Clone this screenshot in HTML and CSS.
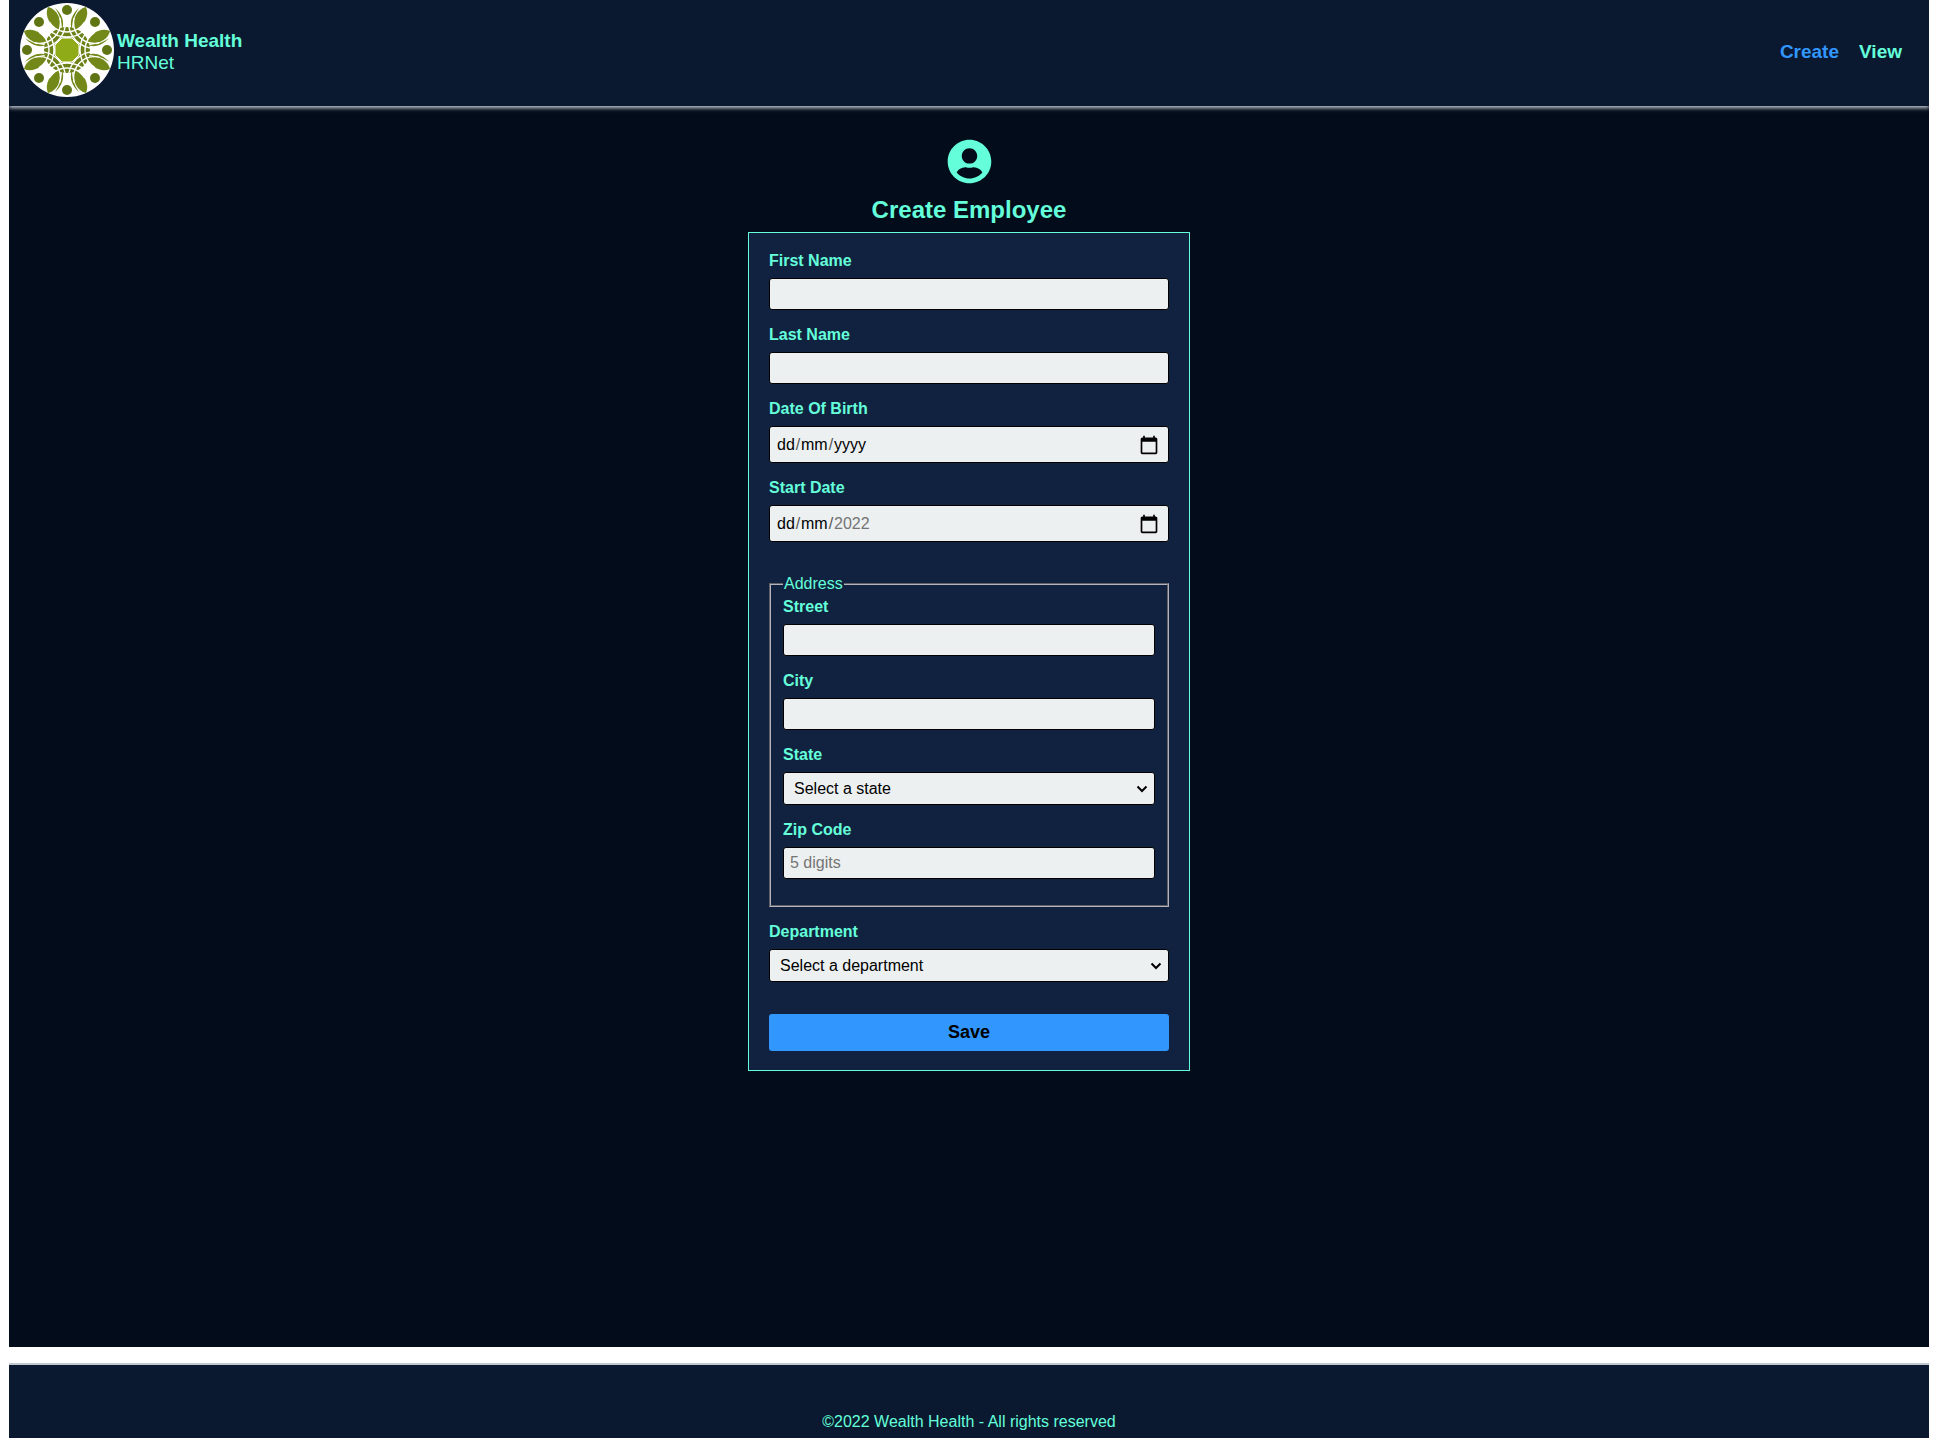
FILE: index.html
```html
<!DOCTYPE html>
<html lang="en">
<head>
<meta charset="utf-8">
<meta name="viewport" content="width=device-width, initial-scale=1">
<title>HRNet - Create Employee</title>
<link rel="stylesheet" href="styles.css">
</head>
<body>
<header class="site-header">
  <div class="brand">
    <svg class="brand-logo" viewBox="-47 -47 94 94" aria-hidden="true">
      <defs>
        <clipPath id="inner"><circle r="33"/></clipPath>
        <g id="leaf">
          <path d="M-19-43C-10-41-5-31-7-19C-17-24-23-34-19-43Z"/>
          <path d="M-12-42C-5-36-2-28-5-20C-5-28-7-35-12-42Z"/>
        </g>
        <g id="leaves"><use href="#leaf"/><use href="#leaf" transform="scale(-1 1)"/></g>
        <g id="arc"><circle cy="-39" r="21"/><circle cy="-39" r="26"/></g>
      </defs>
      <circle r="47" fill="#fff"/>
      <circle r="18" fill="none" stroke="#6b8218" stroke-width="10"/>
      <g fill="#72891a">
        <use href="#leaves"/><use href="#leaves" transform="rotate(90)"/><use href="#leaves" transform="rotate(180)"/><use href="#leaves" transform="rotate(270)"/>
      </g>
      <g clip-path="url(#inner)" fill="none" stroke="#fff" stroke-width="1.400">
        <use href="#arc"/><use href="#arc" transform="rotate(45)"/><use href="#arc" transform="rotate(90)"/><use href="#arc" transform="rotate(135)"/><use href="#arc" transform="rotate(180)"/><use href="#arc" transform="rotate(225)"/><use href="#arc" transform="rotate(270)"/><use href="#arc" transform="rotate(315)"/>
      </g>
      <path d="M-5-12H5L12-5V5L5 12H-5L-12 5V-5Z" fill="#8fab18" stroke="#fff"/>
      <g fill="#5f7412">
        <circle cy="-40" r="5"/><circle cy="40" r="5"/><circle cx="-40" r="5"/><circle cx="40" r="5"/>
        <circle cx="28" cy="-28" r="5"/><circle cx="28" cy="28" r="5"/><circle cx="-28" cy="28" r="5"/><circle cx="-28" cy="-28" r="5"/>
      </g>
    </svg>
    <div class="brand-text"><strong>Wealth Health</strong><span>HRNet</span></div>
  </div>
  <nav class="site-nav">
    <a class="nav-link nav-link-active" href="#create">Create</a>
    <a class="nav-link" href="#view">View</a>
  </nav>
</header>

<main class="page">
  <svg class="user-icon" viewBox="0 0 496 512" aria-hidden="true"><path fill="currentColor" d="M248 8C111 8 0 119 0 256s111 248 248 248 248-111 248-248S385 8 248 8zm0 96c48.600 0 88 39.400 88 88s-39.400 88-88 88-88-39.400-88-88 39.400-88 88-88zm0 344c-58.700 0-111.300-26.600-146.500-68.200 18.800-35.400 55.600-59.800 98.500-59.800 2.400 0 4.800.4 7.100 1.100 13 4.200 26.600 6.900 40.900 6.900 14.300 0 28-2.700 40.900-6.900 2.300-.7 4.700-1.100 7.100-1.100 42.900 0 79.700 24.400 98.500 59.800C359.300 421.400 306.700 448 248 448z"/></svg>
  <h1 class="page-title">Create Employee</h1>

  <form class="employee-form">
    <div class="field">
      <label class="label" for="first-name">First Name</label>
      <input class="control" id="first-name" type="text">
    </div>
    <div class="field">
      <label class="label" for="last-name">Last Name</label>
      <input class="control" id="last-name" type="text">
    </div>
    <div class="field">
      <label class="label" for="birth-day">Date Of Birth</label>
      <div class="control date-control">
        <input class="date-part date-day" id="birth-day" type="text" placeholder="dd" aria-label="Day of birth"><span class="date-slash">/</span><input class="date-part date-month" type="text" placeholder="mm" aria-label="Month of birth"><span class="date-slash">/</span><input class="date-part date-year" type="text" placeholder="yyyy" aria-label="Year of birth">
        <button class="date-picker" type="button" aria-label="Pick date of birth"><svg viewBox="0 0 24 24" aria-hidden="true"><path d="M20 3h-1V1h-2v2H7V1H5v2H4c-1.100 0-2 .9-2 2v16c0 1.100.9 2 2 2h16c1.100 0 2-.9 2-2V5c0-1.100-.9-2-2-2zm0 18H4V8h16v13z"/></svg></button>
      </div>
    </div>
    <div class="field">
      <label class="label" for="start-day">Start Date</label>
      <div class="control date-control">
        <input class="date-part date-day" id="start-day" type="text" placeholder="dd" aria-label="Start day"><span class="date-slash">/</span><input class="date-part date-month" type="text" placeholder="mm" aria-label="Start month"><span class="date-slash">/</span><input class="date-part date-year date-preset" type="text" value="2022" readonly aria-label="Start year">
        <button class="date-picker" type="button" aria-label="Pick start date"><svg viewBox="0 0 24 24" aria-hidden="true"><path d="M20 3h-1V1h-2v2H7V1H5v2H4c-1.100 0-2 .9-2 2v16c0 1.100.9 2 2 2h16c1.100 0 2-.9 2-2V5c0-1.100-.9-2-2-2zm0 18H4V8h16v13z"/></svg></button>
      </div>
    </div>

    <fieldset class="address">
      <legend>Address</legend>
      <div class="field">
        <label class="label" for="street">Street</label>
        <input class="control" id="street" type="text">
      </div>
      <div class="field">
        <label class="label" for="city">City</label>
        <input class="control" id="city" type="text">
      </div>
      <div class="field">
        <label class="label" for="state">State</label>
        <select class="control select-control" id="state"><option>Select a state</option></select>
      </div>
      <div class="field">
        <label class="label" for="zip">Zip Code</label>
        <input class="control" id="zip" type="text" placeholder="5 digits">
      </div>
    </fieldset>

    <div class="field">
      <label class="label" for="department">Department</label>
      <select class="control select-control" id="department"><option>Select a department</option></select>
    </div>
    <button class="save-button" type="submit">Save</button>
  </form>
</main>

<footer class="site-footer">©2022 Wealth Health - All rights reserved</footer>
</body>
</html>
```
FILE: styles.css
```css
* {
  box-sizing: border-box;
}

body {
  display: flex;
  flex-direction: column;
  min-height: 100vh;
  margin: 0 10px 0 9px;
  background: #fff;
  color: #64ffda;
  font: 16px/18px "Liberation Sans", Arial, sans-serif;
}

/* Header */
.site-header {
  position: relative;
  display: flex;
  align-items: center;
  justify-content: space-between;
  padding: 3px 27px 9px 11px;
  background: #0a192f;
  box-shadow: 0 2px 4px #c6ccd4;
  clip-path: inset(0 0 -8px 0);
}

.brand {
  display: flex;
  align-items: center;
  gap: 3px;
}

.brand-logo {
  display: block;
  width: 94px;
  height: 94px;
}

.brand-text {
  display: flex;
  flex-direction: column;
  padding-top: 3px;
  font-size: 19px;
  line-height: 22px;
}

.site-nav {
  display: flex;
  gap: 20px;
  padding-top: 3px;
}

.nav-link {
  color: #64ffda;
  font-size: 19px;
  font-weight: bold;
  line-height: 22px;
  text-decoration: none;
}

.nav-link-active {
  color: #3296ff;
}

/* Main content */
.page {
  display: flex;
  flex: 1;
  flex-direction: column;
  align-items: center;
  padding: 33px 20px;
  background: #020c1b;
}

.user-icon {
  width: 45px;
  height: 45px;
}

.page-title {
  margin: 12px 0 8px;
  font-size: 24px;
  line-height: 28px;
}

.employee-form {
  display: flex;
  flex-direction: column;
  gap: 14px;
  width: 100%;
  max-width: 442px;
  padding: 17px 20px 19px;
  border: 1px solid #64ffda;
  background: #112240;
}

.field {
  display: flex;
  flex-direction: column;
  gap: 6px;
}

.label {
  font-weight: bold;
  line-height: 22px;
}

.control {
  width: 100%;
  height: 32px;
  padding: 0 6px;
  border: 1px solid #000;
  border-radius: 3px;
  background: #ecf0f1;
  color: #000;
  font: inherit;
}

.control::placeholder {
  color: #757575;
}

.select-control {
  height: 33px;
  padding: 0 10px;
  appearance: none;
  background: #ecf0f1 url("data:image/svg+xml,%3Csvg xmlns='http://www.w3.org/2000/svg' viewBox='0 0 12 8'%3E%3Cpath d='M1.500 1.500L6 6l4.500-4.500' fill='none' stroke='%23000' stroke-width='2'/%3E%3C/svg%3E") no-repeat right 6px center / 12px 8px;
}

.date-control {
  display: flex;
  align-items: center;
  height: 37px;
  padding: 0 9px 0 7px;
}

.date-part {
  padding: 0;
  border: 0;
  background: transparent;
  color: #000;
  font: inherit;
}

.date-part::placeholder {
  color: #000;
}

.date-preset {
  color: #757575;
}

.date-day {
  width: 18px;
}

.date-month {
  width: 27px;
}

.date-year {
  width: 40px;
}

.date-slash {
  width: 6px;
  color: #555;
  text-align: center;
}

.date-picker {
  margin-left: auto;
  padding: 0;
  border: 0;
  background: none;
}

.date-picker svg {
  display: block;
  width: 20px;
  height: 20px;
}

.address {
  display: flex;
  flex-direction: column;
  gap: 14px;
  min-width: 0;
  margin: 19px 0 0;
  padding: 3px 12px 26px;
  border: 2px groove #b4b2ba;
}

.address legend {
  padding: 0 1px;
}

.save-button {
  height: 37px;
  margin-top: 18px;
  padding: 0 6px 1px;
  border: 0;
  border-radius: 3px;
  background: #3296ff;
  color: #000;
  font: bold 18px/20px "Liberation Sans", Arial, sans-serif;
}

/* Footer */
.site-footer {
  margin-top: 16px;
  padding: 48px 20px 7px;
  border-top: 2px solid #c0c8d0;
  background: #0a192f;
  text-align: center;
}
```
